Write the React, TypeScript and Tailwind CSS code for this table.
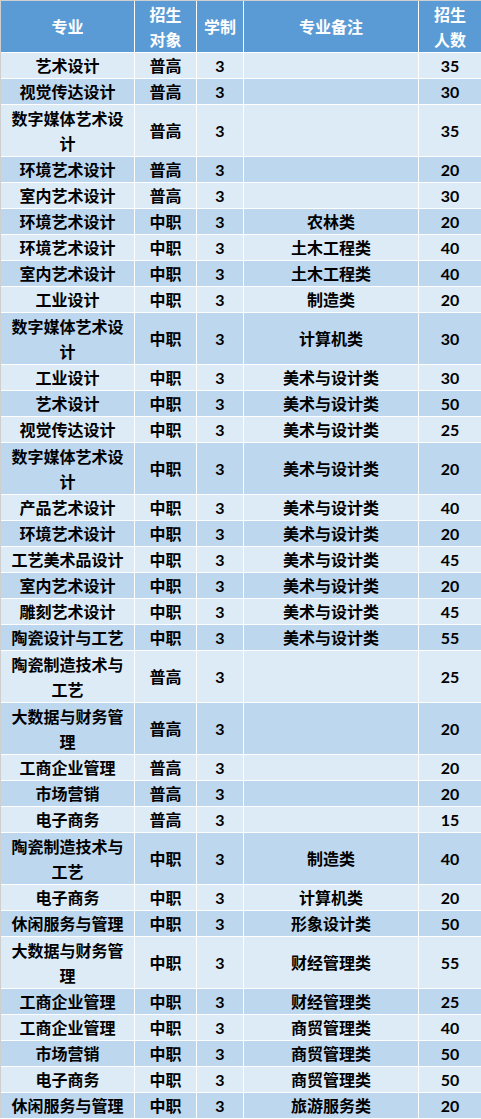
import React from 'react';

type Row = {
  name: string;
  target: string;
  note: string;
  count: string;
  tall?: boolean;
};

const rows: Row[] = [
  { name: '艺术设计', target: '普高', note: '', count: '35' },
  { name: '视觉传达设计', target: '普高', note: '', count: '30' },
  { name: '数字媒体艺术设计', target: '普高', note: '', count: '35', tall: true },
  { name: '环境艺术设计', target: '普高', note: '', count: '20' },
  { name: '室内艺术设计', target: '普高', note: '', count: '30' },
  { name: '环境艺术设计', target: '中职', note: '农林类', count: '20' },
  { name: '环境艺术设计', target: '中职', note: '土木工程类', count: '40' },
  { name: '室内艺术设计', target: '中职', note: '土木工程类', count: '40' },
  { name: '工业设计', target: '中职', note: '制造类', count: '20' },
  { name: '数字媒体艺术设计', target: '中职', note: '计算机类', count: '30', tall: true },
  { name: '工业设计', target: '中职', note: '美术与设计类', count: '30' },
  { name: '艺术设计', target: '中职', note: '美术与设计类', count: '50' },
  { name: '视觉传达设计', target: '中职', note: '美术与设计类', count: '25' },
  { name: '数字媒体艺术设计', target: '中职', note: '美术与设计类', count: '20', tall: true },
  { name: '产品艺术设计', target: '中职', note: '美术与设计类', count: '40' },
  { name: '环境艺术设计', target: '中职', note: '美术与设计类', count: '20' },
  { name: '工艺美术品设计', target: '中职', note: '美术与设计类', count: '45' },
  { name: '室内艺术设计', target: '中职', note: '美术与设计类', count: '20' },
  { name: '雕刻艺术设计', target: '中职', note: '美术与设计类', count: '45' },
  { name: '陶瓷设计与工艺', target: '中职', note: '美术与设计类', count: '55' },
  { name: '陶瓷制造技术与工艺', target: '普高', note: '', count: '25', tall: true },
  { name: '大数据与财务管理', target: '普高', note: '', count: '20', tall: true },
  { name: '工商企业管理', target: '普高', note: '', count: '20' },
  { name: '市场营销', target: '普高', note: '', count: '20' },
  { name: '电子商务', target: '普高', note: '', count: '15' },
  { name: '陶瓷制造技术与工艺', target: '中职', note: '制造类', count: '40', tall: true },
  { name: '电子商务', target: '中职', note: '计算机类', count: '20' },
  { name: '休闲服务与管理', target: '中职', note: '形象设计类', count: '50' },
  { name: '大数据与财务管理', target: '中职', note: '财经管理类', count: '55', tall: true },
  { name: '工商企业管理', target: '中职', note: '财经管理类', count: '25' },
  { name: '工商企业管理', target: '中职', note: '商贸管理类', count: '40' },
  { name: '市场营销', target: '中职', note: '商贸管理类', count: '50' },
  { name: '电子商务', target: '中职', note: '商贸管理类', count: '50' },
  { name: '休闲服务与管理', target: '中职', note: '旅游服务类', count: '20' },
];

const headers = [
  ['专业'],
  ['招生', '对象'],
  ['学制'],
  ['专业备注'],
  ['招生', '人数'],
];

export default function App() {
  return (
    <div
      className="w-[481px] bg-white border-l border-t border-[#cfcfcf] text-[16px] leading-[25px] font-bold"
      style={{ fontFamily: '"Lato", "Noto Sans CJK SC", sans-serif' }}
    >
      <div className="grid grid-cols-[133px_61px_46px_174px_62px] gap-px bg-white">
        {headers.map((h, i) => (
          <div
            key={i}
            className="h-[51px] bg-[#5b9bd5] text-white flex flex-col items-center justify-center"
          >
            {h.map((line) => (
              <span key={line}>{line}</span>
            ))}
          </div>
        ))}

        {rows.map((r, i) => {
          const bg = i % 2 === 0 ? 'bg-[#ddebf7]' : 'bg-[#bdd7ee]';
          const h = r.tall ? 'h-[51px]' : 'h-[25px]';
          const cell = `${bg} ${h} flex items-center justify-center text-center text-black`;
          return (
            <React.Fragment key={i}>
              <div className={`${cell} px-1`}>{r.name}</div>
              <div className={cell}>{r.target}</div>
              <div className={cell}>3</div>
              <div className={cell}>{r.note}</div>
              <div className={cell}>{r.count}</div>
            </React.Fragment>
          );
        })}
      </div>
    </div>
  );
}
